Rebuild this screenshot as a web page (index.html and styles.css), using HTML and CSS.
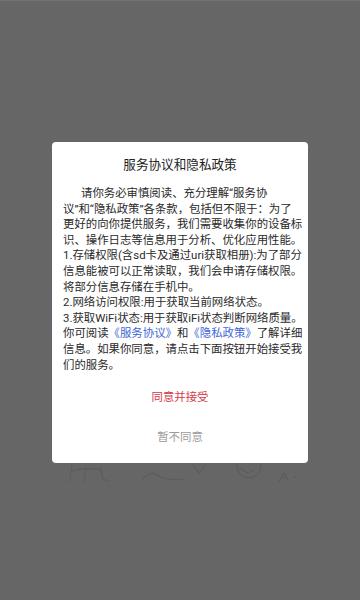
FILE: index.html
```html
<!DOCTYPE html>
<html lang="zh-CN">
<head>
    <meta charset="UTF-8">
    <meta name="viewport" content="width=device-width, initial-scale=1.0">
    <title>服务协议和隐私政策</title>
    <link rel="stylesheet" href="styles.css">
</head>
<body>
    <div class="page">
        <!-- 弹窗 -->
        <div class="dialog">
            <h3 class="dialog-title">服务协议和隐私政策</h3>
            <p class="dialog-text">
                请你务必审慎阅读、充分理解“服务协<br>
                议”和“隐私政策”各条款，包括但不限于：为了<br>
                更好的向你提供服务，我们需要收集你的设备标<br>
                识、操作日志等信息用于分析、优化应用性能。<br>
                1.存储权限(含sd卡及通过uri获取相册):为了部分<br>
                信息能被可以正常读取，我们会申请存储权限。<br>
                将部分信息存储在手机中。<br>
                2.网络访问权限:用于获取当前网络状态。<br>
                3.获取WiFi状态:用于获取iFi状态判断网络质量。<br>
                你可阅读<a class="link" href="#">《服务协议》</a>和<a class="link" href="#">《隐私政策》</a>了解详细<br>
                信息。如果你同意，请点击下面按钮开始接受我<br>
                们的服务。
            </p>
            <div class="btn btn-ok">同意并接受</div>
            <div class="btn btn-no">暂不同意</div>
        </div>
        <!-- 弹窗下面露出来的插画 -->
        <svg class="behind" width="360" height="40" viewBox="0 0 360 40">
            <g fill="none" stroke="#5d5d5d" stroke-width="1.2" stroke-linecap="round">
                <path d="M72 4 L70 20 M72 10 Q88 6 100 9 M86 6 L84 20 M100 6 L103 18 L108 20"/>
                <path d="M143 18 Q152 8 160 16 Q170 20 184 18"/>
                <path d="M193 4 L199 12 L205 4"/>
                <path d="M279 20 L284 12 L288 20 M281 17 L287 17"/>
                <circle cx="249" cy="5" r="12"/>
                <path d="M241 8 L247 12 L254 9 M246 0 L252 3"/>
            </g>
            <circle cx="295" cy="16" r="0.9" fill="#5d5d5d"/>
        </svg>
    </div>
</body>
</html>
```

FILE: styles.css
```css
*{
    margin: 0;
    padding: 0;
    box-sizing: border-box;
}
html,body{
    width: 360px;
    height: 600px;
    overflow: hidden;
}
body{
    background-color: #666666;
    font-family: Roboto, "Noto Sans CJK SC", sans-serif;
}
.page{
    height: 600px;
    padding-top: 142px;
    border-top: 1px solid #737373;
}
.dialog{
    position: relative;
    z-index: 1;
    width: 256px;
    margin: -1px auto 0;
    padding: 13px 0 6px;
    background-color: #fff;
    border-radius: 4px;
}
.dialog-title{
    font-size: 12.6px;
    font-weight: normal;
    line-height: 20px;
    color: #222;
    text-align: center;
}
.dialog-text{
    margin-top: 11px;
    padding: 0 3px 0 11px;
    font-size: 11.4px;
    line-height: 15.6px;
    color: #2a2a2a;
    text-indent: 18px;
}
.link{
    color: #3d66d6;
    text-decoration: none;
}
.btn{
    height: 40px;
    line-height: 40px;
    font-size: 11.4px;
    text-align: center;
}
.btn-ok{
    margin-top: 4px;
    color: #d6394b;
}
.btn-no{
    color: #9c9c9c;
}
.behind{
    display: block;
    margin-top: -2px;
}
```
